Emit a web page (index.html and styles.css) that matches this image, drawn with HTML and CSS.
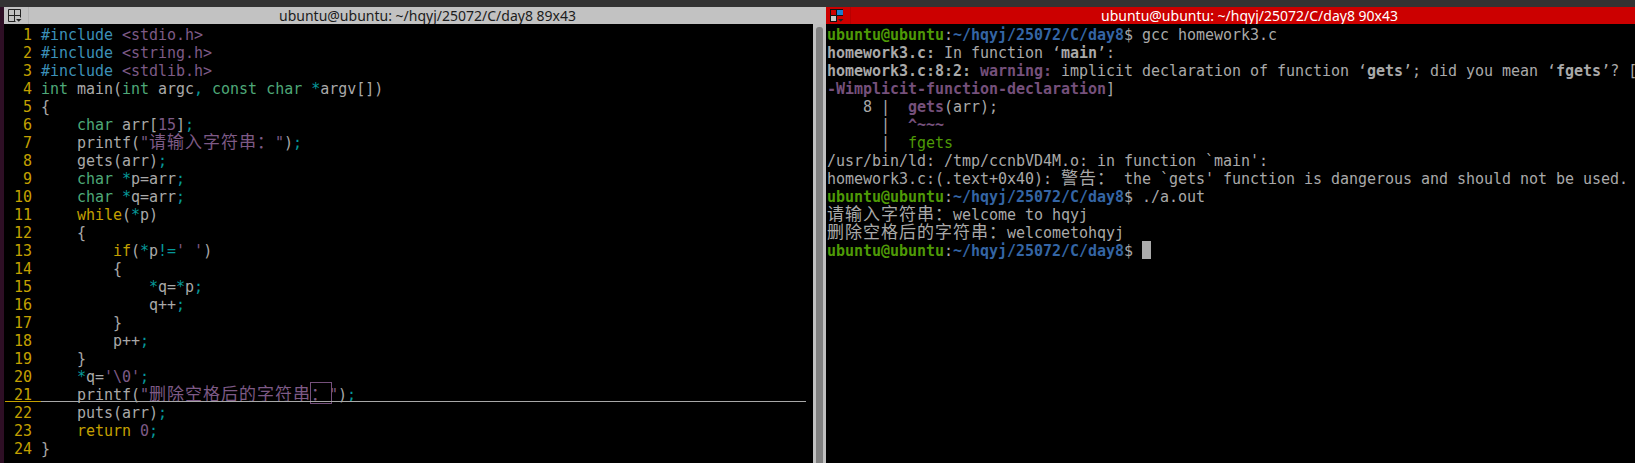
FILE: index.html
```html
<!DOCTYPE html>
<html lang="en">
<head>
<meta charset="utf-8">
<title>terminator</title>
<link rel="stylesheet" href="styles.css">
</head>
<body>
<div class="topbar"></div>
<div class="desktop">
  <div class="edge"></div>
  <section class="pane">
    <header class="titlebar">
      <div class="tb-icon">
        <svg width="14" height="14" viewBox="0 0 14 14"><path d="M7.500 12.500H.5V.5h12v8M6.500.5v12M.5 6.500h12" fill="none" stroke="#222"/><path d="M8 10h5.500l-2.750 2.800z" fill="#222"/></svg>
      </div>
      <div class="tb-title">ubuntu@ubuntu: ~/hqyj/25072/C/day8 89x43</div>
    </header>
    <div class="term">
      <div class="screen vim">
<div class="row"><span class="ln">  1 </span><span class="pp">#include</span> <span class="str">&lt;stdio.h&gt;</span></div>
<div class="row"><span class="ln">  2 </span><span class="pp">#include</span> <span class="str">&lt;string.h&gt;</span></div>
<div class="row"><span class="ln">  3 </span><span class="pp">#include</span> <span class="str">&lt;stdlib.h&gt;</span></div>
<div class="row"><span class="ln">  4 </span><span class="ty">int</span> main(<span class="ty">int</span> argc<span class="op">,</span> <span class="ty">const</span> <span class="ty">char</span> <span class="op">*</span>argv[])</div>
<div class="row"><span class="ln">  5 </span>{</div>
<div class="row"><span class="ln">  6 </span>    <span class="ty">char</span> arr[<span class="str">15</span>]<span class="op">;</span></div>
<div class="row"><span class="ln">  7 </span>    printf(<span class="str">"<span class="cjk">请输入字符串：</span>"</span>)<span class="op">;</span></div>
<div class="row"><span class="ln">  8 </span>    gets(arr)<span class="op">;</span></div>
<div class="row"><span class="ln">  9 </span>    <span class="ty">char</span> <span class="op">*</span>p=arr<span class="op">;</span></div>
<div class="row"><span class="ln"> 10 </span>    <span class="ty">char</span> <span class="op">*</span>q=arr<span class="op">;</span></div>
<div class="row"><span class="ln"> 11 </span>    <span class="kw">while</span>(<span class="op">*</span>p)</div>
<div class="row"><span class="ln"> 12 </span>    {</div>
<div class="row"><span class="ln"> 13 </span>        <span class="kw">if</span>(<span class="op">*</span>p<span class="op">!=</span><span class="str">' '</span>)</div>
<div class="row"><span class="ln"> 14 </span>        {</div>
<div class="row"><span class="ln"> 15 </span>            <span class="op">*</span>q=<span class="op">*</span>p<span class="op">;</span></div>
<div class="row"><span class="ln"> 16 </span>            q++<span class="op">;</span></div>
<div class="row"><span class="ln"> 17 </span>        }</div>
<div class="row"><span class="ln"> 18 </span>        p++<span class="op">;</span></div>
<div class="row"><span class="ln"> 19 </span>    }</div>
<div class="row"><span class="ln"> 20 </span>    <span class="op">*</span>q=<span class="str">'\0'</span><span class="op">;</span></div>
<div class="row cursorline"><span class="ln"> 21 </span>    printf(<span class="str">"<span class="cjk">删除空格后的字符串<span class="match">：</span></span>"</span>)<span class="op">;</span></div>
<div class="row"><span class="ln"> 22 </span>    puts(arr)<span class="op">;</span></div>
<div class="row"><span class="ln"> 23 </span>    <span class="kw">return</span> <span class="str">0</span><span class="op">;</span></div>
<div class="row"><span class="ln"> 24 </span>}</div>
      </div>
      <div class="scrollbar"><div class="thumb"></div></div>
    </div>
  </section>
  <section class="pane active">
    <header class="titlebar">
      <div class="tb-icon">
        <svg width="14" height="14" viewBox="0 0 14 14"><rect x="0" y="0" width="13" height="13" fill="#111"/><rect x="1" y="1" width="5" height="5" fill="#c00"/><rect x="7" y="1" width="6" height="5" fill="#1a7fd0"/><rect x="1" y="7" width="5" height="5" fill="#c8c8c8"/><rect x="7" y="7" width="7" height="7" fill="#c00"/><path d="M8 10h5.500l-2.750 2.800z" fill="#222"/></svg>
      </div>
      <div class="tb-title">ubuntu@ubuntu: ~/hqyj/25072/C/day8 90x43</div>
    </header>
    <div class="term">
      <div class="screen shell">
<div class="row"><b class="user">ubuntu@ubuntu</b>:<b class="path">~/hqyj/25072/C/day8</b>$ gcc homework3.c</div>
<div class="row"><b>homework3.c:</b> In function ‘<b>main</b>’:</div>
<div class="row"><b>homework3.c:8:2:</b> <b class="warn">warning:</b> implicit declaration of function ‘<b>gets</b>’; did you mean ‘<b>fgets</b>’? [</div>
<div class="row"><b class="warn">-Wimplicit-function-declaration</b>]</div>
<div class="row">    8 |  <b class="warn">gets</b>(arr);</div>
<div class="row">      |  <b class="warn">^~~~</b></div>
<div class="row">      |  <span class="hint">fgets</span></div>
<div class="row">/usr/bin/ld: /tmp/ccnbVD4M.o: in function `main':</div>
<div class="row">homework3.c:(.text+0x40): <span class="cjk">警告：</span> the `gets' function is dangerous and should not be used.</div>
<div class="row"><b class="user">ubuntu@ubuntu</b>:<b class="path">~/hqyj/25072/C/day8</b>$ ./a.out</div>
<div class="row"><span class="cjk">请输入字符串：</span>welcome to hqyj</div>
<div class="row"><span class="cjk">删除空格后的字符串：</span>welcometohqyj</div>
<div class="row"><b class="user">ubuntu@ubuntu</b>:<b class="path">~/hqyj/25072/C/day8</b>$ <span class="cursor"></span></div>
      </div>
    </div>
  </section>
</div>
</body>
</html>
```
FILE: styles.css
```css
* { box-sizing: border-box; }
html, body { margin: 0; padding: 0; height: 100%; }
body {
  width: 1635px;
  height: 463px;
  overflow: hidden;
  background: #000;
  display: flex;
  flex-direction: column;
}
.topbar { height: 7px; background: #333; flex: none; }
.desktop { display: flex; flex: 1; min-height: 0; }
.edge { width: 4px; flex: none; background: #2e0f25; }
.pane {
  width: 822px;
  flex: none;
  display: flex;
  flex-direction: column;
}
.titlebar {
  height: 17px;
  flex: none;
  display: flex;
  background: #c2c2c2;
  color: #1c1c1c;
}
.pane.active .titlebar { background: #cc0000; color: #fff; }
.tb-icon {
  width: 25px;
  flex: none;
  padding: 2px 0 0 4px;
  border-right: 1px solid #b4b4b4;
}
.tb-icon svg { display: block; }
.pane.active .tb-icon { border-right-color: #b80000; }
.tb-title {
  flex: 1;
  text-align: center;
  font: 14px/17px "Noto Sans", sans-serif;
  white-space: nowrap;
}
.term { flex: 1; min-height: 0; display: flex; background: #000; }
.screen {
  flex: 1;
  min-width: 0;
  padding: 2px 0 0 1px;
  font: 15px/18px "DejaVu Sans Mono", "Noto Sans CJK SC", monospace;
  letter-spacing: -0.03px;
  color: #a9a9a9;
  overflow: hidden;
}
.row { height: 18px; white-space: pre; position: relative; }
.cjk {
  font-family: "Noto Sans CJK SC", sans-serif;
  font-size: 17px;
  line-height: 0;
  letter-spacing: 1px;
}
.ln { color: #c4a000; }
.pp { color: #3c90b8; }
.str { color: #7d5a86; }
.ty { color: #4ea878; }
.kw { color: #c4a000; }
.op { color: #06989a; }
.cursorline::after {
  content: "";
  position: absolute;
  left: 0;
  top: 15px;
  width: 801px;
  height: 1px;
  background: linear-gradient(to right, #c4a000 36px, #a8a8a8 36px);
}
.match { position: relative; }
.match::after {
  content: "";
  position: absolute;
  left: -1px;
  top: 2px;
  width: 20px;
  height: 20px;
  border: 1px solid #75507b;
}
.scrollbar {
  width: 13px;
  flex: none;
  background: #c0c0c0;
  padding: 3px 3px 0 3px;
}
.thumb { height: 100%; background: #808080; border-radius: 3px 3px 0 0; }
.shell b { font-weight: 700; }
.user { color: #4e9a06; }
.path { color: #3465a4; }
.warn { color: #75507b; }
.hint { color: #4e9a06; }
.cursor {
  display: inline-block;
  width: 9px;
  height: 18px;
  vertical-align: top;
  margin-top: -1px;
  background: #aaa;
}
```
